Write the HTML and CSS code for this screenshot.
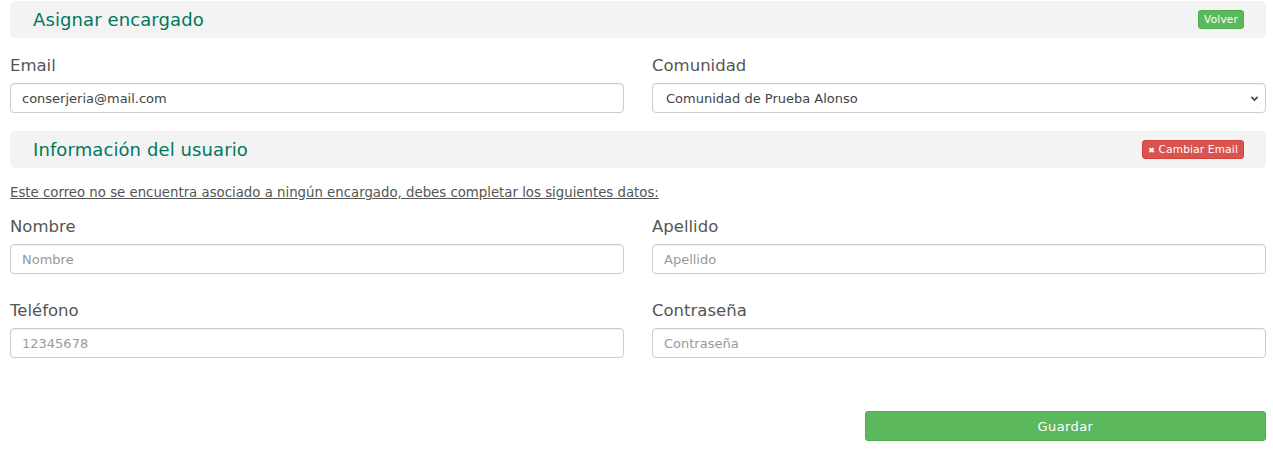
FILE: index.html
```html
<!DOCTYPE html>
<html lang="es">
<head>
<meta charset="utf-8">
<title>Asignar encargado</title>
<link rel="stylesheet" href="styles.css">
</head>
<body>
<div class="page">
  <div class="panel-head">
    <h2 class="panel-title">Asignar encargado</h2>
    <button class="btn btn-success btn-xs" type="button">Volver</button>
  </div>

  <div class="row row-first">
    <div class="field">
      <label class="label">Email</label>
      <input class="control control-value" type="text" value="conserjeria@mail.com">
    </div>
    <div class="field">
      <label class="label">Comunidad</label>
      <div class="select-wrap">
        <select class="control control-value select">
          <option>Comunidad de Prueba Alonso</option>
        </select>
        <svg class="chev" width="9" height="9" viewBox="0 0 10 10"><path d="M1.5 3.2 L5 6.7 L8.5 3.2" fill="none" stroke="#444" stroke-width="1.8"/></svg>
      </div>
    </div>
  </div>

  <div class="panel-head panel-second">
    <h2 class="panel-title">Información del usuario</h2>
    <button class="btn btn-danger btn-xs" type="button"><span class="x">&#10006;</span> Cambiar Email</button>
  </div>

  <p class="notice">Este correo no se encuentra asociado a ningún encargado, debes completar los siguientes datos:</p>

  <div class="row">
    <div class="field">
      <label class="label">Nombre</label>
      <input class="control" type="text" placeholder="Nombre">
    </div>
    <div class="field">
      <label class="label">Apellido</label>
      <input class="control" type="text" placeholder="Apellido">
    </div>
  </div>

  <div class="row row-gap">
    <div class="field">
      <label class="label">Teléfono</label>
      <input class="control" type="text" placeholder="12345678">
    </div>
    <div class="field">
      <label class="label">Contraseña</label>
      <input class="control" type="password" placeholder="Contraseña">
    </div>
  </div>

  <div class="row row-actions">
    <div></div>
    <div class="actions">
      <button class="btn btn-success btn-block" type="button">Guardar</button>
    </div>
  </div>
</div>
</body>
</html>
```

FILE: styles.css
```css
* { box-sizing: border-box; }
html, body { margin: 0; padding: 0; background: #fff; }
body {
  font-family: "DejaVu Sans", "Open Sans", sans-serif;
  color: #555;
}
.page {
  padding: 1px 7px 0 10px;
  width: 1273px;
}
.panel-head {
  display: flex;
  align-items: center;
  justify-content: space-between;
  height: 37px;
  background: #f3f3f3;
  border-radius: 5px;
  padding: 0 22px 0 23px;
}
.panel-title {
  margin: 0;
  font-size: 18px;
  font-weight: normal;
  color: #00785e;
  letter-spacing: 0.1px;
  line-height: 22px;
}
.btn {
  font-family: inherit;
  border: 1px solid transparent;
  border-radius: 3px;
  color: #fff;
  cursor: pointer;
  padding: 0;
}
.btn-xs {
  height: 19px;
  font-size: 10.5px;
  padding: 0 5px;
  line-height: 17px;
  letter-spacing: 0.2px;
}
.btn-success { background: #5cb85c; border-color: #4cae4c; }
.btn-danger { background: #d9534f; border-color: #d43f3a; }
.x { font-size: 8px; }
.row {
  display: grid;
  grid-template-columns: 614px 614px;
  column-gap: 28px;
}
.row-first { margin-top: 16px; margin-bottom: 18px; }
.row-gap { margin-top: 25px; }
.field { display: flex; flex-direction: column; }
.label {
  font-size: 16.5px;
  line-height: 22px;
  padding-top: 1px;
  margin-bottom: 6px;
  color: #555;
}
.control {
  height: 30px;
  width: 100%;
  border: 1px solid #ccc;
  border-radius: 4px;
  padding: 0 11px;
  font-family: inherit;
  font-size: 13px;
  color: #555;
  background: #fff;
  box-shadow: inset 0 1px 1px rgba(0,0,0,0.06);
}
.control::placeholder { color: #999; }
.control-value { color: #444; }
.select-wrap { position: relative; }
.select {
  appearance: none;
  -webkit-appearance: none;
  padding-left: 13px;
}
.chev {
  position: absolute;
  right: 7px;
  top: 11px;
  pointer-events: none;
}
.notice {
  margin: 16px 0 13px;
  font-size: 13.3px;
  text-decoration: underline;
  color: #555;
  line-height: 18px;
}
.row-actions { margin-top: 53px; }
.btn-block {
  width: 401px;
  height: 30px;
  font-size: 13px;
  border-radius: 3px;
  letter-spacing: 0.4px;
}
.actions { display: flex; justify-content: flex-end; }
```
